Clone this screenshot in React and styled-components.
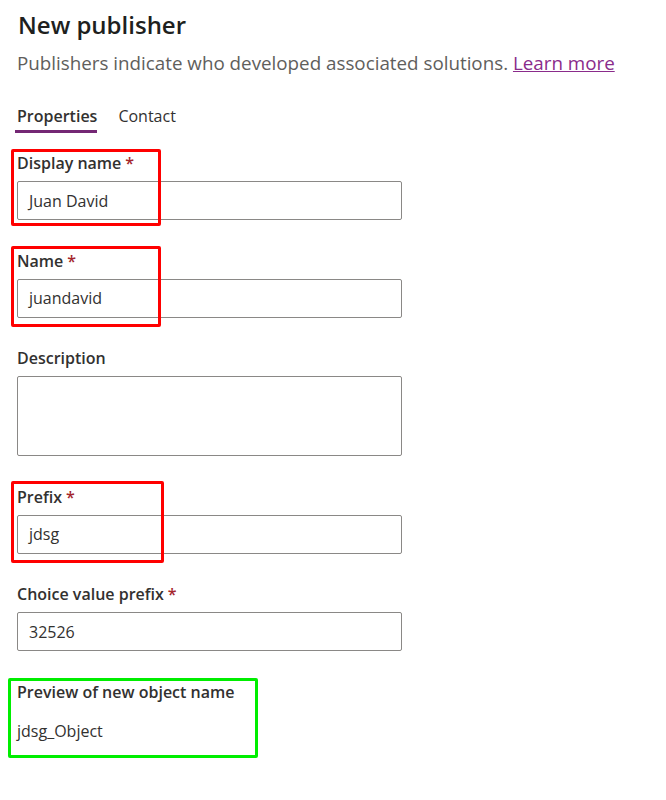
import React from 'react'
import styled, { createGlobalStyle } from 'styled-components'

const GlobalStyle = createGlobalStyle`
  body {
    margin: 0;
    background: #ffffff;
    font-family: "Segoe UI", "Open Sans", "Noto Sans", sans-serif;
    color: #323130;
  }
`

const Page = styled.div`
  padding: 8px 0 0 17px;
  width: 666px;
  min-height: 800px;
  box-sizing: border-box;
`

const Title = styled.h1`
  margin: 0 0 0 1px;
  font-size: 24px;
  font-weight: 600;
  line-height: 34px;
  color: #201f1e;
`

const Subtitle = styled.p`
  margin: 8px 0 0 0;
  font-size: 18.8px;
  line-height: 26px;
  color: #605e5c;

  a {
    color: #8a2b8b;
    text-decoration: underline;
  }
`

const Tabs = styled.div`
  display: flex;
  gap: 21px;
  margin-top: 29px;
`

const Tab = styled.div`
  font-size: 16px;
  line-height: 22px;
  font-weight: ${p => (p.active ? 600 : 400)};
  color: #323130;
  padding-bottom: 3px;
  border-bottom: 3px solid ${p => (p.active ? '#742774' : 'transparent')};
  margin-left: ${p => (p.active ? '-2px' : '0')};
  padding-left: ${p => (p.active ? '2px' : '0')};
`

const Form = styled.div`
  display: flex;
  flex-direction: column;
  gap: 29.6px;
  margin-top: 19px;
`

const Field = styled.div`
  position: relative;
  display: flex;
  flex-direction: column;
  gap: ${p => p.gap || 7}px;
`

const Label = styled.label`
  font-size: 16px;
  line-height: 22px;
  font-weight: 600;
  color: #323130;

  span {
    color: #a4262c;
    margin-left: 4px;
  }
`

const Input = styled.div`
  width: 385px;
  height: ${p => p.tall || 39}px;
  box-sizing: border-box;
  border: 1px solid #8a8886;
  border-radius: 2px;
  padding: 0 11px;
  display: flex;
  align-items: ${p => (p.tall ? 'flex-start' : 'center')};
  font-size: 16px;
  color: #323130;
`

const Value = styled.div`
  font-size: 16px;
  line-height: 22px;
  color: #323130;
`

const Highlight = styled.div`
  position: absolute;
  left: ${p => p.left}px;
  top: ${p => p.top}px;
  width: ${p => p.w}px;
  height: ${p => p.h}px;
  box-sizing: border-box;
  border: 3px solid ${p => p.color};
  border-radius: 2px;
  pointer-events: none;
`

export default function App() {
  return (
    <>
      <GlobalStyle />
      <Page>
        <Title>New publisher</Title>
        <Subtitle>
          Publishers indicate who developed associated solutions. <a href="#">Learn more</a>
        </Subtitle>
        <Tabs>
          <Tab active>Properties</Tab>
          <Tab>Contact</Tab>
        </Tabs>
        <Form>
          <Field>
            <Label>Display name<span>*</span></Label>
            <Input>Juan David</Input>
            <Highlight color="#ff0000" left={-6} top={-3} w={150} h={77} />
          </Field>
          <Field>
            <Label>Name<span>*</span></Label>
            <Input>juandavid</Input>
            <Highlight color="#ff0000" left={-6} top={-4} w={150} h={81} />
          </Field>
          <Field>
            <Label>Description</Label>
            <Input tall={80} />
          </Field>
          <Field>
            <Label>Prefix<span>*</span></Label>
            <Input>jdsg</Input>
            <Highlight color="#ff0000" left={-6} top={-5} w={153} h={82} />
          </Field>
          <Field>
            <Label>Choice value prefix<span>*</span></Label>
            <Input>32526</Input>
          </Field>
          <Field gap={17}>
            <Label>Preview of new object name</Label>
            <Value>jdsg_Object</Value>
            <Highlight color="#00ee00" left={-9} top={-3} w={250} h={80} />
          </Field>
        </Form>
      </Page>
    </>
  )
}
